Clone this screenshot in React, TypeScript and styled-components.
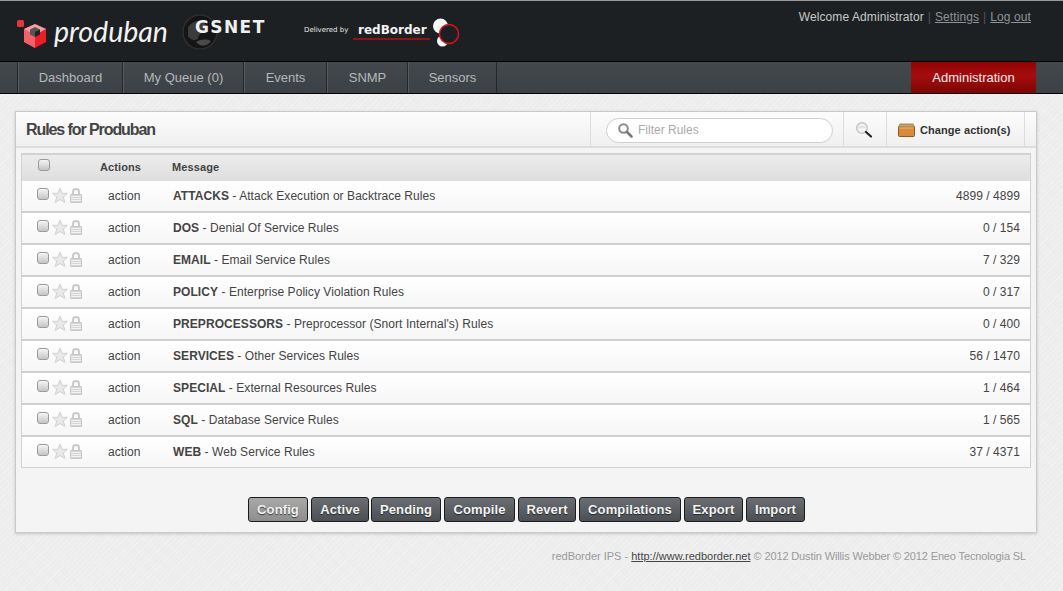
import React from "react";
import styled, { createGlobalStyle } from "styled-components";

const Global = createGlobalStyle`
  html, body { margin: 0; padding: 0; }
  body {
    background-color: #eeeeee;
    background-image:
      repeating-linear-gradient(45deg, rgba(0,0,0,0.012) 0 1px, transparent 1px 3px),
      repeating-linear-gradient(-45deg, rgba(255,255,255,0.25) 0 1px, transparent 1px 4px);
    font-family: "Liberation Sans", Arial, sans-serif;
    font-size: 12px;
    color: #444;
    height: 591px;
    overflow: hidden;
  }
`;

const Header = styled.header`
  height: 60px;
  background: #1d2023;
  border-top: 1px solid #999;
  border-bottom: 1px solid #000;
  display: flex;
  align-items: flex-start;
  justify-content: space-between;
  box-sizing: content-box;
`;
const Logos = styled.div`
  display: flex;
  align-items: flex-start;
  padding: 13px 0 0 16px;
`;
const LogoMark = styled.svg`
  width: 32px;
  height: 32px;
  margin-top: 2px;
  flex: none;
`;
const ProdubanText = styled.span`
  font-family: Lato, "Open Sans", sans-serif;
  font-style: italic;
  font-weight: 400;
  font-size: 28.5px;
  line-height: 34px;
  color: #f2f2f2;
  margin-left: 6px;
  width: 114px;
`;
const GsnetGroup = styled.div`
  position: relative;
  display: flex;
  align-items: center;
  width: 84px;
  margin-left: 16px;
  height: 36px;
`;
const GsnetGlobe = styled.svg`
  position: absolute;
  left: -2px;
  top: 0;
  width: 36px;
  height: 36px;
`;
const GsnetText = styled.span`
  position: relative;
  margin: -10px 0 0 11px;
  font-family: "DejaVu Sans", sans-serif;
  font-weight: 700;
  font-size: 17px;
  letter-spacing: 1.4px;
  color: #f0f0f0;
`;
const Delivered = styled.span`
  font-family: "DejaVu Sans", sans-serif;
  font-size: 7px;
  color: #e8e8e8;
  margin: 12px 0 0 36px;
  width: 51px;
  white-space: nowrap;
`;
const RedBorder = styled.span`
  font-family: "DejaVu Sans", sans-serif;
  font-weight: 700;
  font-size: 12px;
  line-height: 20px;
  height: 20px;
  color: #f4f4f4;
  border-bottom: 2px solid #8e1218;
  padding: 0 0 0 5px;
  margin: 6px 0 0 -2px;
  box-sizing: border-box;
  width: 77px;
  white-space: nowrap;
`;
const RedMark = styled.svg`
  width: 30px;
  height: 32px;
  margin: 3px 0 0 1px;
`;
const UserBox = styled.div`
  padding: 9px 32px 0 0;
  color: #c8c8c8;
  font-size: 12px;
  line-height: 15px;
  display: flex;
  letter-spacing: 0.09px;
`;
const UserLink = styled.a`
  color: #8e9296;
  text-decoration: underline;
`;
const Sep = styled.span`
  color: #555;
  margin: 0 4px;
`;

const Nav = styled.nav`
  height: 31px;
  background: linear-gradient(#43484c, #3c4145);
  border-bottom: 1px solid #000;
  padding-left: 17px;
  padding-right: 27px;
  display: flex;
`;
const NavItem = styled.a`
  display: flex;
  align-items: center;
  justify-content: center;
  height: 31px;
  box-sizing: border-box;
  width: ${(p) => p.$w}px;
  padding-left: 1px;
  border-left: 1px solid #23272a;
  box-shadow: inset 1px 0 0 #565b5f;
  color: #b4b8ba;
  font-size: 13px;
`;
const NavEnd = styled.span`
  width: 1px;
  height: 31px;
  background: #23272a;
  margin-right: auto;
`;
const AdminItem = styled.a`
  display: flex;
  align-items: center;
  justify-content: center;
  width: 125px;
  height: 31px;
  background: linear-gradient(#8f0404, #a60d0d 45%, #7b0505);
  color: #eeeeee;
  font-size: 13px;
`;

const Panel = styled.section`
  margin: 17px 26px 0 15px;
  height: 422px;
  box-sizing: border-box;
  background: #f4f4f4;
  border: 1px solid #c9c9c9;
  box-shadow: 0 1px 3px rgba(0, 0, 0, 0.18);
`;
const PanelHead = styled.div`
  height: 36px;
  box-sizing: border-box;
  border-bottom: 2px solid #dedede;
  background: linear-gradient(#fcfcfc, #f0f0f0);
  display: flex;
  align-items: stretch;
`;
const Title = styled.h2`
  margin: 0 auto 0 0;
  padding-left: 10px;
  font-size: 16px;
  line-height: 35px;
  font-weight: 700;
  color: #444;
  letter-spacing: -1.08px;
`;
const HeadCell = styled.div`
  display: flex;
  align-items: center;
  box-sizing: border-box;
  border-left: 1px solid #dcdcdc;
  width: ${(p) => p.$w}px;
  padding-left: ${(p) => p.$pl}px;
  padding-top: 2px;
`;
const SearchBox = styled.div`
  width: 227px;
  height: 25px;
  box-sizing: border-box;
  background: #fff;
  border: 1px solid #cfcfcf;
  border-radius: 13px;
  display: flex;
  align-items: center;
  padding-left: 10px;
  gap: 5px;
  color: #aaa;
  font-size: 12px;
`;
const ChangeLabel = styled.span`
  font-size: 11px;
  font-weight: 700;
  color: #333;
  margin-left: 5px;
  letter-spacing: 0.08px;
  white-space: nowrap;
`;
const HeadEnd = styled.div`
  width: 11px;
  border-left: 1px solid #dcdcdc;
`;

const Table = styled.div`
  margin: 5px 5px 0;
  border: 1px solid #d2d2d2;
  border-top-width: 2px;
`;
const THead = styled.div`
  height: 26px;
  box-sizing: border-box;
  padding-bottom: 3px;
  background: linear-gradient(#ececec, #dedede);
  display: grid;
  grid-template-columns: 78px 72px 1fr;
  align-items: center;
  font-size: 11px;
  font-weight: 700;
  color: #444;
  letter-spacing: 0.1px;
`;
const HeadCheck = styled.div`
  padding: 0 0 4px 16px;
  display: flex;
`;
const Row = styled.div`
  height: 32px;
  box-sizing: border-box;
  background: linear-gradient(#ffffff, #f6f6f6);
  border-bottom: 2px solid #cfcfcf;
  display: grid;
  grid-template-columns: 78px 73px 1fr auto;
  align-items: center;
  font-size: 12px;
  color: #444;
  letter-spacing: 0.06px;

  &:last-child {
    border-bottom-width: 0;
    height: 30px;
  }
`;
const Icons = styled.div`
  display: flex;
  align-items: center;
  padding: 0 0 2px 15px;
  gap: 2px;
`;
const Check = styled.span`
  display: block;
  width: 10px;
  height: 10px;
  border: 1px solid #9a9a9a;
  border-radius: 3px;
  background: linear-gradient(#f6f6f6, #c4c4c4);
  margin-top: ${(p) => p.$mt || 0}px;
  margin-right: ${(p) => p.$mr || 0}px;
  flex: none;
`;
const ActionCell = styled.div`
  padding-left: 8px;
`;
const Count = styled.div`
  padding-right: 10px;
`;
const Buttons = styled.div`
  display: flex;
  justify-content: center;
  margin-top: 29px;
  padding-left: 1px;
`;
const Btn = styled.a`
  height: 25px;
  box-sizing: border-box;
  width: ${(p) => p.$w}px;
  margin-left: ${(p) => p.$gap}px;
  display: flex;
  align-items: center;
  justify-content: center;
  border: 1px solid #1c1c1c;
  border-radius: 3px;
  background: ${(p) =>
    p.$active
      ? "linear-gradient(#a8a8a8, #8e8e8e)"
      : "linear-gradient(#6a6e72, #4c5054)"};
  color: ${(p) => (p.$active ? "#f0f0f0" : "#f4f4f4")};
  font-size: 13px;
  font-weight: 700;
  letter-spacing: 0.12px;
  text-shadow: 0 1px 1px rgba(0, 0, 0, 0.6);
`;
const Footer = styled.footer`
  text-align: right;
  padding: 16px 37px 0 0;
  font-size: 11px;
  line-height: 14px;
  color: #999;
`;
const FooterLink = styled.a`
  color: #444;
  text-decoration: underline;
`;
const FooterCopy = styled.span`
  letter-spacing: -0.13px;
`;

const StarIcon = () => (
  <svg width="16" height="17" viewBox="0 0 16 16">
    <path d="M8 .8l2.2 5h5.3l-4.2 3.6 1.4 5.6L8 12l-4.7 3 1.4-5.6L.5 5.8h5.3z" fill="#e9e9e9" stroke="#d0d0d0" />
  </svg>
);
const LockIcon = () => (
  <svg width="12" height="15" viewBox="0 0 12 15">
    <path d="M3 7V4.200C3 2.400 4.300 1 6 1s3 1.400 3 3.200V7" fill="none" stroke="#cacaca" strokeWidth="2" />
    <rect x=".5" y="6.500" width="11" height="8" rx=".5" fill="#d4d4d4" stroke="#c8c8c8" />
    <path d="M1 8.500h10M1 10.500h10M1 12.500h10" stroke="#f2f2f2" />
  </svg>
);

const rules = [
  ["ATTACKS", "Attack Execution or Backtrace Rules", "4899 / 4899"],
  ["DOS", "Denial Of Service Rules", "0 / 154"],
  ["EMAIL", "Email Service Rules", "7 / 329"],
  ["POLICY", "Enterprise Policy Violation Rules", "0 / 317"],
  ["PREPROCESSORS", "Preprocessor (Snort Internal's) Rules", "0 / 400"],
  ["SERVICES", "Other Services Rules", "56 / 1470"],
  ["SPECIAL", "External Resources Rules", "1 / 464"],
  ["SQL", "Database Service Rules", "1 / 565"],
  ["WEB", "Web Service Rules", "37 / 4371"],
];
const navItems: [string, number][] = [
  ["Dashboard", 105],
  ["My Queue (0)", 121],
  ["Events", 83],
  ["SNMP", 81],
  ["Sensors", 89],
];
const buttons: [string, number, number][] = [
  ["Config", 60, 0],
  ["Active", 58, 3],
  ["Pending", 70, 2],
  ["Compile", 71, 3],
  ["Revert", 58, 3],
  ["Compilations", 102, 3],
  ["Export", 59, 3],
  ["Import", 59, 3],
];

export default function App() {
  return (
    <>
      <Global />
      <Header>
        <Logos>
          <LogoMark viewBox="0 0 32 32">
            <rect x="1" y="4" width="7" height="7" rx="1.5" fill="#e8323c" />
            <path d="M19 8l11 5v13l-11 6-11-6V13z" fill="#ee1c25" />
            <path d="M8 13l11 6v13l-11-6z" fill="#f0616a" />
            <path d="M19 8l11 5-11 6-11-6z" fill="#f5a0a4" />
            <path d="M19 11l5 2.500v5L19 21l-5-2.500v-5z" fill="#555" />
            <path d="M19 16l5-2.500v5L19 21z" fill="#222" />
          </LogoMark>
          <ProdubanText>produban</ProdubanText>
          <GsnetGroup>
            <GsnetGlobe viewBox="0 0 36 36">
              <circle cx="18" cy="18" r="17" fill="#141414" stroke="#2e2e2e" strokeWidth="1.5" />
              <path d="M6 13c6-8 15-7 18-2-2 8-7 8-8 13-2 4-8 2-10-2z" fill="#3b3b3b" />
              <path d="M14 28c5-3 11-3 15-1-4 6-11 6-15 1z" fill="#494949" />
            </GsnetGlobe>
            <GsnetText>GSNET</GsnetText>
          </GsnetGroup>
          <Delivered>Delivered by</Delivered>
          <RedBorder>redBorder</RedBorder>
          <RedMark viewBox="0 0 30 32">
            <circle cx="9.500" cy="9" r="7.500" fill="#f6f6f6" />
            <circle cx="11.500" cy="24" r="5.500" fill="#f6f6f6" />
            <circle cx="18" cy="17" r="9.500" fill="#1d2023" stroke="#d8141c" strokeWidth="1.500" />
          </RedMark>
        </Logos>
        <UserBox>
          Welcome Administrator
          <Sep>|</Sep>
          <UserLink>Settings</UserLink>
          <Sep>|</Sep>
          <UserLink>Log out</UserLink>
        </UserBox>
      </Header>
      <Nav>
        {navItems.map(([label, w]) => (
          <NavItem key={label} $w={w}>
            {label}
          </NavItem>
        ))}
        <NavEnd />
        <AdminItem>Administration</AdminItem>
      </Nav>
      <Panel>
        <PanelHead>
          <Title>Rules for Produban</Title>
          <HeadCell $w={253} $pl={15}>
            <SearchBox>
              <svg width="16" height="16" viewBox="0 0 16 16">
                <circle cx="6.500" cy="6.500" r="4.300" fill="none" stroke="#8a8a8a" strokeWidth="2" />
                <path d="M10 10l4.500 4.500" stroke="#777" strokeWidth="2.500" strokeLinecap="round" />
              </svg>
              Filter Rules
            </SearchBox>
          </HeadCell>
          <HeadCell $w={43} $pl={11}>
            <svg width="18" height="18" viewBox="0 0 18 18">
              <circle cx="7" cy="7" r="5.300" fill="#f2f2f2" stroke="#c4c4c4" strokeWidth="1.400" />
              <path d="M3.500 6h7" stroke="#d4d4d4" />
              <path d="M11 11l5 4.500" stroke="#222" strokeWidth="2.200" strokeLinecap="round" />
            </svg>
          </HeadCell>
          <HeadCell $w={138} $pl={11}>
            <svg width="17" height="14" viewBox="0 0 17 14">
              <rect x=".5" y="3.500" width="16" height="10" rx="1" fill="#d98a3c" stroke="#8a5a1e" />
              <path d="M2 1h13l1.500 3H.5z" fill="#c9a56a" stroke="#8a6a2e" strokeWidth=".7" />
              <path d="M1.500 5h14" stroke="#eeb878" />
            </svg>
            <ChangeLabel>Change action(s)</ChangeLabel>
          </HeadCell>
          <HeadEnd />
        </PanelHead>
        <Table>
          <THead>
            <HeadCheck>
              <Check />
            </HeadCheck>
            <span>Actions</span>
            <span>Message</span>
          </THead>
          {rules.map(([name, desc, count]) => (
            <Row key={name}>
              <Icons>
                <Check $mt={-2} $mr={1} />
                <StarIcon />
                <LockIcon />
              </Icons>
              <ActionCell>action</ActionCell>
              <div>
                <strong>{name}</strong> - {desc}
              </div>
              <Count>{count}</Count>
            </Row>
          ))}
        </Table>
        <Buttons>
          {buttons.map(([label, w, gap], i) => (
            <Btn key={label} $w={w} $gap={gap} $active={i === 0}>
              {label}
            </Btn>
          ))}
        </Buttons>
      </Panel>
      <Footer>
        redBorder IPS - <FooterLink>http://www.redborder.net</FooterLink>{" "}
        <FooterCopy>© 2012 Dustin Willis Webber © 2012 Eneo Tecnologia SL</FooterCopy>
      </Footer>
    </>
  );
}
